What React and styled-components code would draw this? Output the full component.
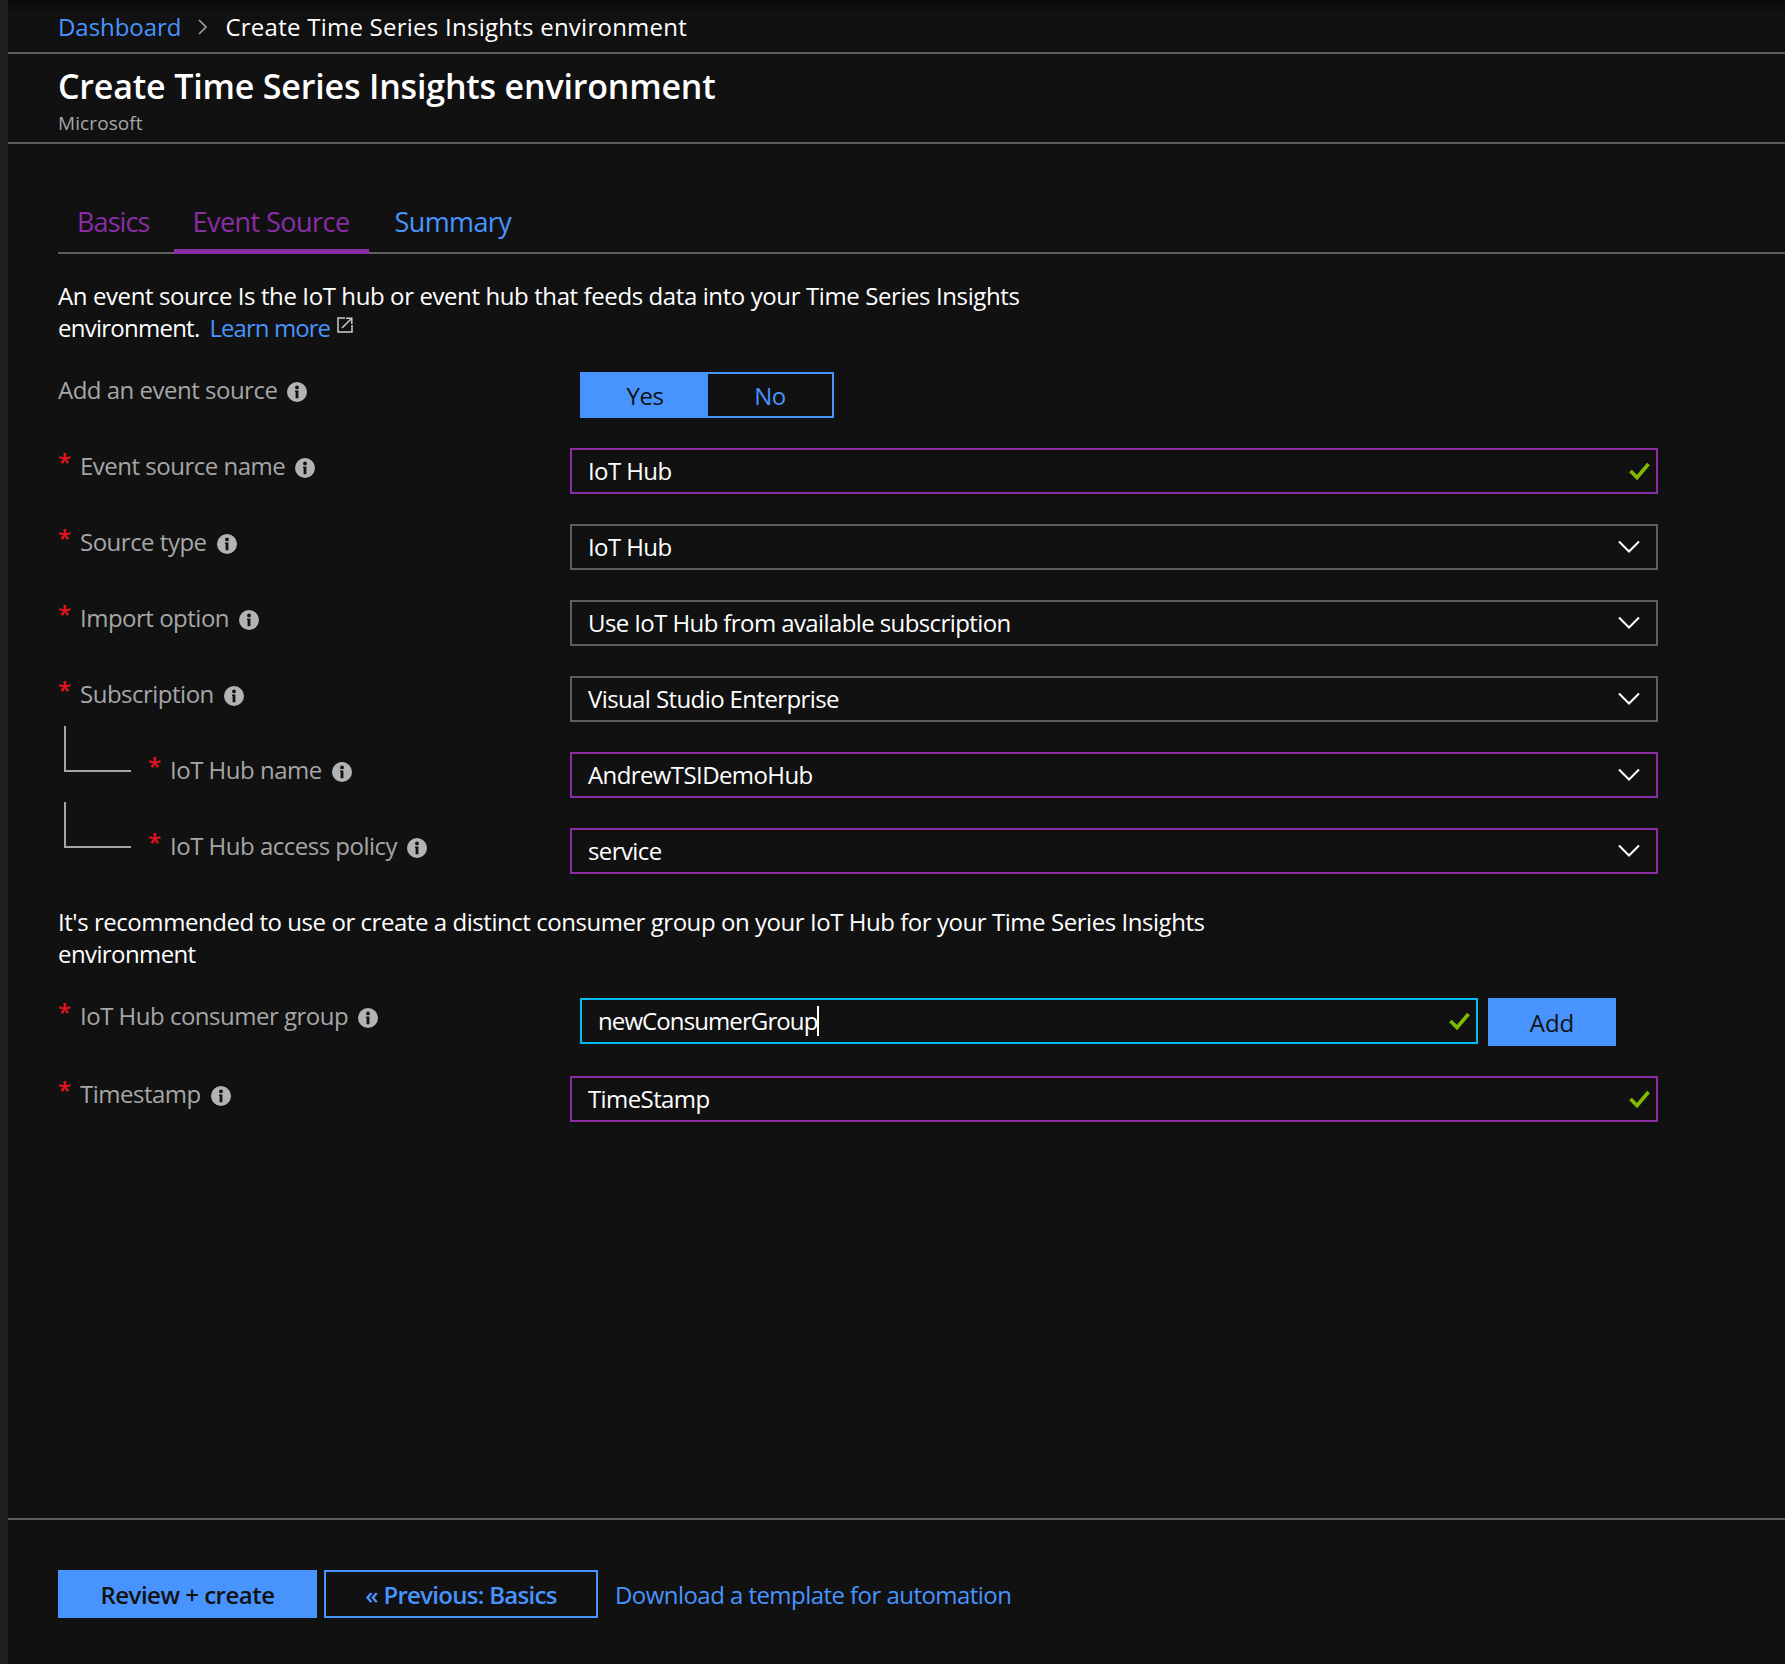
import React from "react";
import styled, { createGlobalStyle } from "styled-components";

const BLUE = "#4894fe";
const PURPLE = "#8a2da5";
const CYAN = "#00bcf2";
const LINE = "#5f5f5f";
const GRAY = "#a6a6a6";

const GlobalStyle = createGlobalStyle`
  html, body {
    margin: 0;
    padding: 0;
    background: #111111;
  }
  body {
    font-family: "Open Sans", "Noto Sans", sans-serif;
  }
`;

const Page = styled.div`
  position: relative;
  width: 1785px;
  height: 1664px;
  box-sizing: border-box;
  background: #111111;
  border-left: 8px solid #1e1e1e;
  display: flex;
  flex-direction: column;
  overflow: hidden;

  /* little tick left over on the collapsed side rail */
  &::before {
    content: "";
    position: absolute;
    left: -8px;
    top: 277px;
    width: 8px;
    height: 2px;
    background: #555555;
  }
`;

const Breadcrumbs = styled.div`
  height: 54px;
  box-sizing: border-box;
  border-bottom: 2px solid ${LINE};
  padding: 1px 0 0 50px;
  display: flex;
  align-items: center;
  gap: 16px;
  font-size: 24px;
  letter-spacing: 0.25px;
  color: #ffffff;
  background: linear-gradient(#0a0a0a, #111111 14px);
`;

const CrumbLink = styled.span`
  color: ${BLUE};
  letter-spacing: -0.05px;
`;

const Header = styled.div`
  height: 90px;
  box-sizing: border-box;
  border-bottom: 2px solid ${LINE};
  padding: 10px 0 0 50px;
`;

const Title = styled.h1`
  margin: 0;
  font-size: 34px;
  line-height: 44px;
  font-weight: 600;
  letter-spacing: -0.18px;
  color: #ffffff;
`;

const Publisher = styled.div`
  margin-top: 2px;
  font-size: 19px;
  line-height: 26px;
  letter-spacing: 0.1px;
  color: ${GRAY};
`;

const Content = styled.div`
  flex: 1;
  padding-left: 50px;
  display: flex;
  flex-direction: column;
`;

const Tabs = styled.div`
  margin-top: 53px;
  height: 57px;
  box-sizing: border-box;
  border-bottom: 2px solid ${LINE};
  display: flex;
  gap: 5px;
`;

const Tab = styled.div`
  padding: 0 19px 0 ${(p) => p.$left ?? 19}px;
  height: 57px;
  box-sizing: border-box;
  border-bottom: 5px solid ${(p) => (p.$active ? PURPLE : "transparent")};
  font-size: 27px;
  line-height: 50px;
  letter-spacing: ${(p) => p.$spacing ?? -0.5}px;
  color: ${(p) => (p.$visited ? PURPLE : BLUE)};
`;

const Paragraph = styled.div`
  margin-top: ${(p) => p.$top}px;
  font-size: 24px;
  line-height: 32px;
  color: #ffffff;
`;

const TextLine = styled.div`
  display: flex;
  align-items: center;
  letter-spacing: ${(p) => p.$spacing}px;
`;

const LearnMore = styled.a`
  color: ${BLUE};
  margin-left: 10px;
  letter-spacing: -0.95px;
`;

const ExternalIcon = styled.svg`
  width: 16px;
  height: 16px;
  margin: 0 0 6px 7px;
`;

const Row = styled.div`
  display: flex;
  height: 46px;
  margin-top: ${(p) => p.$top ?? 30}px;
`;

const LabelCell = styled.div`
  width: 512px;
  flex: none;
  display: flex;
  align-items: flex-start;
  padding: 2px 0 0 ${(p) => (p.$nested ? 90 : 0)}px;
  box-sizing: border-box;
  position: relative;
  font-size: 24px;
  line-height: 32px;
  letter-spacing: -0.5px;
  color: ${GRAY};
`;

const Star = styled.span`
  color: #e81123;
  width: 22px;
  flex: none;
  margin-top: -4px;
  font-weight: 600;
`;

const Info = styled.svg`
  width: 20px;
  height: 20px;
  margin: 8px 0 0 10px;
  flex: none;
`;

const Elbow = styled.span`
  position: absolute;
  left: 6px;
  top: -26px;
  width: 65px;
  height: 44px;
  border-left: 2px solid #a6a6a6;
  border-bottom: 2px solid #a6a6a6;
`;

const Field = styled.div`
  width: 1088px;
  height: 46px;
  box-sizing: border-box;
  border: 2px solid ${(p) => (p.$valid ? PURPLE : LINE)};
  padding: 0 16px;
  display: flex;
  align-items: center;
  justify-content: space-between;
  font-size: 24px;
  letter-spacing: -0.6px;
  color: #ffffff;
`;

const FieldText = styled.span`
  margin-bottom: 2px;
`;

const ToggleGroup = styled.div`
  margin-left: 10px;
  display: flex;
  width: 254px;
  height: 46px;
  box-sizing: border-box;
  border: 2px solid ${BLUE};
`;

const ToggleOption = styled.div`
  width: ${(p) => (p.$on ? 126 : 124)}px;
  box-sizing: border-box;
  display: flex;
  align-items: center;
  justify-content: center;
  font-size: 24px;
  letter-spacing: -0.5px;
  background: ${(p) => (p.$on ? BLUE : "transparent")};
  color: ${(p) => (p.$on ? "#111111" : BLUE)};
`;

const GroupInput = styled.div`
  margin-left: 10px;
  width: 898px;
  height: 46px;
  box-sizing: border-box;
  border: 2px solid ${CYAN};
  padding: 0 16px;
  display: flex;
  align-items: center;
  justify-content: space-between;
  font-size: 24px;
  letter-spacing: -0.9px;
  color: #ffffff;
`;

const Caret = styled.span`
  display: inline-block;
  width: 2px;
  height: 30px;
  background: #ffffff;
  vertical-align: -6px;
`;

const AddButton = styled.div`
  margin-left: 10px;
  width: 128px;
  height: 48px;
  background: ${BLUE};
  color: #111111;
  font-size: 24px;
  display: flex;
  align-items: center;
  justify-content: center;
`;

const FieldIcon = styled.svg`
  flex: none;
  margin-right: ${(p) => p.$shift ?? 0}px;
`;

const Footer = styled.div`
  margin-top: auto;
  height: 146px;
  box-sizing: border-box;
  border-top: 2px solid ${LINE};
  padding: 50px 0 0 50px;
  display: flex;
  align-items: flex-start;
  gap: 7px;
`;

const PrimaryButton = styled.div`
  width: 259px;
  height: 48px;
  background: ${BLUE};
  color: #111111;
  font-size: 24px;
  font-weight: 600;
  letter-spacing: -0.5px;
  display: flex;
  align-items: center;
  justify-content: center;
`;

const OutlineButton = styled.div`
  width: 274px;
  height: 48px;
  box-sizing: border-box;
  border: 2px solid ${BLUE};
  color: ${BLUE};
  font-size: 24px;
  font-weight: 600;
  letter-spacing: -0.7px;
  display: flex;
  align-items: center;
  justify-content: center;
`;

const FooterLink = styled.a`
  margin: 1px 0 0 10px;
  font-size: 24px;
  line-height: 48px;
  letter-spacing: -0.55px;
  color: ${BLUE};
`;

const InfoIcon = () => (
  <Info viewBox="0 0 20 20">
    <circle cx="10" cy="10" r="10" fill="#b3b3b3" />
    <circle cx="10" cy="5.4" r="1.9" fill="#111111" />
    <path d="M8 8.6h3.4v7.6H8.6v-6.2H8z" fill="#111111" />
  </Info>
);

const Check = () => (
  <FieldIcon $shift={-11} width="22" height="20" viewBox="0 0 22 20">
    <path d="M1.5 10L8 16.5 19.5 3" fill="none" stroke="#7fba00" strokeWidth="3.6" />
  </FieldIcon>
);

const Chevron = () => (
  <FieldIcon width="22" height="14" viewBox="0 0 22 14">
    <path d="M1 1.5l10 10 10-10" fill="none" stroke="#ffffff" strokeWidth="2" />
  </FieldIcon>
);

const Label = ({ text, required, nested }) => (
  <LabelCell $nested={nested}>
    {nested && <Elbow />}
    {required && <Star>*</Star>}
    {text}
    <InfoIcon />
  </LabelCell>
);

const App = () => (
  <Page>
    <GlobalStyle />
    <Breadcrumbs>
      <CrumbLink>Dashboard</CrumbLink>
      <svg width="12" height="18" viewBox="0 0 12 18">
        <path d="M2 2l7 7-7 7" fill="none" stroke="#a6a6a6" strokeWidth="1.5" />
      </svg>
      <span>Create Time Series Insights environment</span>
    </Breadcrumbs>
    <Header>
      <Title>Create Time Series Insights environment</Title>
      <Publisher>Microsoft</Publisher>
    </Header>
    <Content>
      <Tabs>
        <Tab $visited $spacing={-0.9}>Basics</Tab>
        <Tab $visited $active $spacing={-0.55}>Event Source</Tab>
        <Tab $left={21} $spacing={-0.6}>Summary</Tab>
      </Tabs>
      <Paragraph $top={26}>
        <TextLine $spacing={-0.4}>An event source Is the IoT hub or event hub that feeds data into your Time Series Insights</TextLine>
        <TextLine $spacing={-0.75}>
          environment.
          <LearnMore>Learn more</LearnMore>
          <ExternalIcon viewBox="0 0 16 16">
            <path d="M8 1H1v14h14V8M5 11l9-9M9 1.2h5.8V7" fill="none" stroke="#cccccc" strokeWidth="1.5" />
          </ExternalIcon>
        </TextLine>
      </Paragraph>
      <Row $top={28}>
        <Label text="Add an event source" />
        <ToggleGroup>
          <ToggleOption $on>Yes</ToggleOption>
          <ToggleOption>No</ToggleOption>
        </ToggleGroup>
      </Row>
      <Row>
        <Label required text="Event source name" />
        <Field $valid><FieldText>IoT Hub</FieldText><Check /></Field>
      </Row>
      <Row>
        <Label required text="Source type" />
        <Field><FieldText>IoT Hub</FieldText><Chevron /></Field>
      </Row>
      <Row>
        <Label required text="Import option" />
        <Field><FieldText>Use IoT Hub from available subscription</FieldText><Chevron /></Field>
      </Row>
      <Row>
        <Label required text="Subscription" />
        <Field><FieldText>Visual Studio Enterprise</FieldText><Chevron /></Field>
      </Row>
      <Row>
        <Label required nested text="IoT Hub name" />
        <Field $valid><FieldText>AndrewTSIDemoHub</FieldText><Chevron /></Field>
      </Row>
      <Row>
        <Label required nested text="IoT Hub access policy" />
        <Field $valid><FieldText>service</FieldText><Chevron /></Field>
      </Row>
      <Paragraph $top={32}>
        <TextLine $spacing={-0.45}>It's recommended to use or create a distinct consumer group on your IoT Hub for your Time Series Insights</TextLine>
        <TextLine $spacing={-0.6}>environment</TextLine>
      </Paragraph>
      <Row $top={28}>
        <Label required text="IoT Hub consumer group" />
        <GroupInput>
          <FieldText>newConsumerGroup<Caret /></FieldText>
          <Check />
        </GroupInput>
        <AddButton>Add</AddButton>
      </Row>
      <Row $top={32}>
        <Label required text="Timestamp" />
        <Field $valid><FieldText>TimeStamp</FieldText><Check /></Field>
      </Row>
    </Content>
    <Footer>
      <PrimaryButton>Review + create</PrimaryButton>
      <OutlineButton>« Previous: Basics</OutlineButton>
      <FooterLink>Download a template for automation</FooterLink>
    </Footer>
  </Page>
);

export default App;
